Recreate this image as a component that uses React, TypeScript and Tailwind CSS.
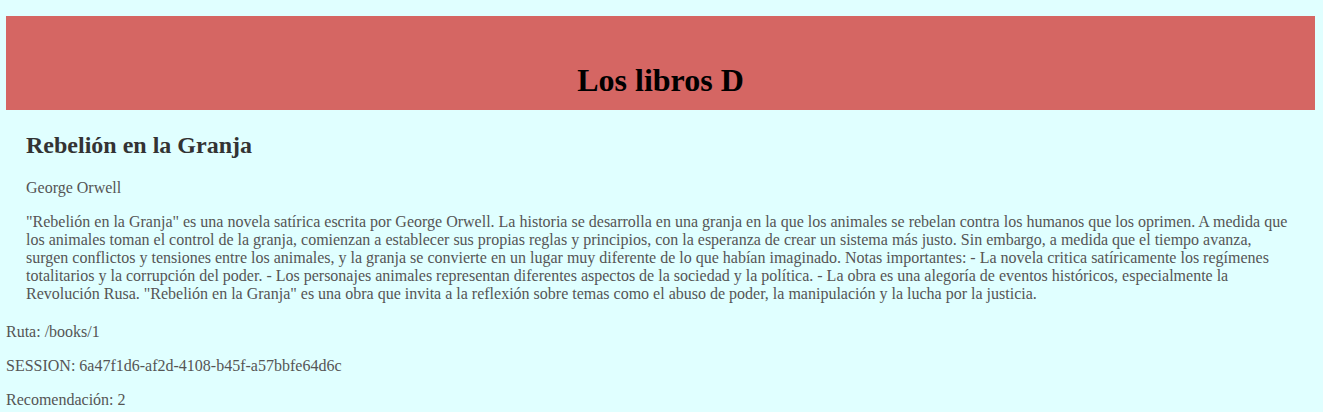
import React from 'react';

const book = {
  title: 'Rebelión en la Granja',
  author: 'George Orwell',
  description:
    '"Rebelión en la Granja" es una novela satírica escrita por George Orwell. La historia se desarrolla en una granja en la que los animales se rebelan contra los humanos que los oprimen. A medida que los animales toman el control de la granja, comienzan a establecer sus propias reglas y principios, con la esperanza de crear un sistema más justo. Sin embargo, a medida que el tiempo avanza, surgen conflictos y tensiones entre los animales, y la granja se convierte en un lugar muy diferente de lo que habían imaginado. Notas importantes: - La novela critica satíricamente los regímenes totalitarios y la corrupción del poder. - Los personajes animales representan diferentes aspectos de la sociedad y la política. - La obra es una alegoría de eventos históricos, especialmente la Revolución Rusa. "Rebelión en la Granja" es una obra que invita a la reflexión sobre temas como el abuso de poder, la manipulación y la lucha por la justicia.',
};

const App = () => {
  return (
    <div className="min-h-screen bg-[#e0ffff] px-[6px] pt-4 pb-2 font-['Liberation_Serif','Times_New_Roman',serif] text-[16px] leading-[18px] text-[#555]">
      <header className="h-[94px] w-[1309px] bg-[#d56663] flex items-end justify-center pb-[11px]">
        <h1 className="text-[32px] font-bold leading-[normal] text-black">Los libros D</h1>
      </header>

      <section className="w-[1309px] px-5">
        <h2 className="mt-[22px] text-[24px] font-bold leading-[normal] text-[#333]">{book.title}</h2>
        <p className="mt-5">{book.author}</p>
        <p className="mt-4">{book.description}</p>
      </section>

      <p className="mt-5">Ruta: /books/1</p>
      <p className="mt-4">SESSION: 6a47f1d6-af2d-4108-b45f-a57bbfe64d6c</p>
      <p className="mt-4">Recomendación: 2</p>
    </div>
  );
};

export default App;
